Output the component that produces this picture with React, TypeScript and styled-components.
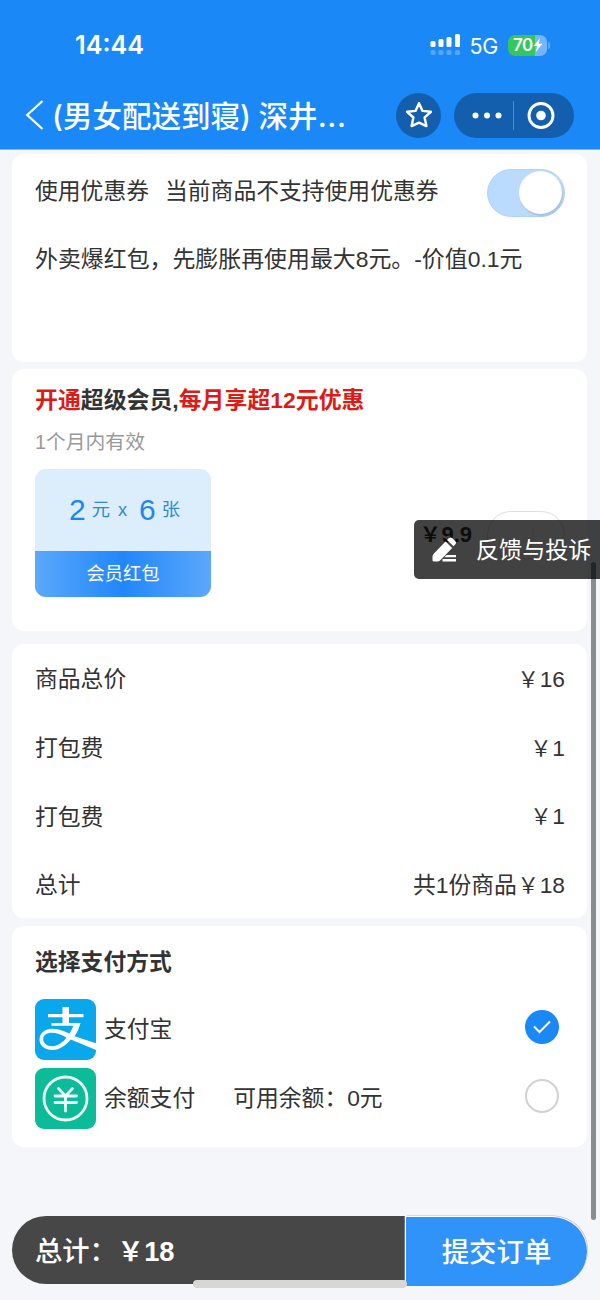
import React from "react";
import styled, { createGlobalStyle } from "styled-components";

const Global = createGlobalStyle`
  * { box-sizing: border-box; }
  body {
    margin: 0;
    background: #f4f6fa;
    color: #333;
    font-family: "Liberation Sans", "Noto Sans CJK SC", sans-serif;
  }
`;

const Screen = styled.main`
  position: relative;
  width: 600px;
  height: 1300px;
  overflow: hidden;
  background: #f4f6fa;
  font-size: 22.8px;
  line-height: 34px;
  white-space: nowrap;
`;

const Header = styled.header`
  height: 150px;
  background: #1b88f7;
  color: #fff;
  border-bottom: 1px solid #74c0fb;
`;

const StatusBar = styled.div`
  display: flex;
  align-items: center;
  height: 90px;
  padding: 0 51px 0 75px;
  font-family: Inter, sans-serif;
`;

const Clock = styled.span`
  flex: 1;
  font-size: 25.2px;
  font-weight: 600;
`;

const Network = styled.span`
  margin: 1px 10px 0 9px;
  font-size: 21.5px;
  letter-spacing: -0.3px;
`;

const Signal = styled.svg`
  display: block;
  margin-right: -1px;
`;

const Battery = styled.div`
  display: flex;
  align-items: center;
  width: 39px;
  height: 21px;
  padding-left: 5px;
  border-radius: 7px;
  background: linear-gradient(90deg, #34c759 27px, #75b6fa 27px);
  font-size: 17px;
  font-weight: 600;
  letter-spacing: -0.5px;
`;

const BatteryCap = styled.div`
  width: 2px;
  height: 7px;
  margin: 0 -1px 0 1px;
  border-radius: 0 2px 2px 0;
  background: #5aa9f9;
`;

const NavBar = styled.div`
  display: flex;
  align-items: center;
  height: 50px;
  padding: 0 26px 0 25px;
`;

const Title = styled.h1`
  flex: 1;
  margin: 1px 0 0 8px;
  font-family: Inter, "Noto Sans CJK SC", sans-serif;
  font-size: 29.5px;
  font-weight: 500;
  line-height: 44px;
`;

const Ellipsis = styled.span`
  letter-spacing: 0.8px;
`;

const StarButton = styled.button`
  display: grid;
  place-items: center;
  width: 45px;
  height: 45px;
  margin-right: 13px;
  padding: 0;
  border: 0;
  border-radius: 50%;
  background: #135fad;
`;

const Capsule = styled.div`
  display: flex;
  align-items: center;
  width: 120px;
  height: 45px;
  border-radius: 23px;
  background: #135fad;
`;

const Content = styled.div`
  padding: 4px 13px 0 12px;
`;

const Card = styled.section<{ $height: number; $gap: number }>`
  height: ${(p) => p.$height}px;
  margin-bottom: ${(p) => p.$gap}px;
  padding: 0 22px 0 23px;
  border-radius: 12px;
  background: #fff;
`;

const Row = styled.div<{ $height?: number }>`
  display: flex;
  align-items: center;
  justify-content: space-between;
  height: ${(p) => p.$height ?? 68.7}px;
`;

const FeeRow = styled(Row)`
  padding-top: 2px;
`;

const CouponRow = styled(Row)`
  padding-top: 5px;
`;

const CouponText = styled.span`
  padding-bottom: 4px;
`;

const CouponLabel = styled.span`
  margin-right: 16px;
`;

const Note = styled.p`
  margin: 16px 0 0;
  font-size: 22.92px;
`;

const Toggle = styled.span<{ $on?: boolean }>`
  display: flex;
  justify-content: ${(p) => (p.$on ? "flex-end" : "flex-start")};
  width: 78px;
  height: 48px;
  padding: 1px 2px;
  border: 1px solid ${(p) => (p.$on ? "#b3d4f9" : "#dedede")};
  border-radius: 24px;
  background: ${(p) => (p.$on ? "#bbdbfe" : "#fff")};
`;

const Knob = styled.span`
  width: 43px;
  height: 43px;
  border-radius: 50%;
  background: #fff;
  box-shadow: 1px 2px 2px rgba(0, 0, 0, 0.13);
`;

const MemberTitle = styled.h2`
  margin: 0;
  padding-top: 14px;
  font-size: 22.9px;
  font-weight: 600;
  line-height: 34px;
`;

const Red = styled.span`
  color: #dd1a14;
`;

const Validity = styled.p`
  margin: 8px 0 0;
  color: #999;
  font-size: 19.8px;
`;

const MemberRow = styled.div`
  display: flex;
  align-items: flex-start;
  justify-content: space-between;
  margin-top: 10px;
`;

const Ticket = styled.div`
  flex: none;
  width: 176px;
  height: 128px;
  margin-right: auto;
  border-radius: 11px;
  overflow: hidden;
  background: #dceefc;
  text-align: center;
`;

const TicketValue = styled.div`
  display: flex;
  align-items: center;
  height: 82px;
  padding-left: 34px;
  color: #2f8bce;
  font-size: 18.3px;
`;

const Big = styled.b`
  margin-right: 6px;
  color: #1f86ea;
  font-size: 30px;
  font-weight: 400;
`;

const Times = styled.span`
  margin: 0 12px 0 8px;
`;

const TicketName = styled.div`
  height: 46px;
  background: linear-gradient(90deg, #5ca8fb, #2087fa 50%, #5ca8fb);
  color: #fff;
  font-size: 18.3px;
  line-height: 45px;
`;

const MemberPrice = styled.strong`
  flex: none;
  margin: 49px 15px 0 0;
  font-size: 22px;
  font-weight: 700;
`;

const Yen = styled.span`
  display: inline-block;
  width: 1em;
  text-align: center;

  & > span {
    margin: 0 -0.1em;
    font-size: 0.94em;
  }
`;

const MemberToggle = styled(Toggle)`
  flex: none;
  margin-top: 42px;
`;

const PayTitle = styled.h2`
  margin: 0;
  padding: 19px 0 16px;
  font-size: 22.8px;
  font-weight: 600;
  line-height: 34px;
`;

const PayLogo = styled.svg`
  flex: none;
  margin-right: 8px;
`;

const PayName = styled.span`
  flex: 1;
`;

const Balance = styled.span`
  margin-left: 38px;
`;

const Radio = styled.span<{ $checked?: boolean }>`
  display: grid;
  place-items: center;
  width: 34px;
  height: 34px;
  margin: 0 6px 4px 0;
  border: ${(p) => (p.$checked ? "0" : "2px solid #d2d2d2")};
  border-radius: 50%;
  background: ${(p) => (p.$checked ? "#1b88f7" : "#fff")};
`;

const OrderBar = styled.footer`
  position: relative;
  display: flex;
  height: 69px;
  margin: 69px 13px 0 12px;
`;

const Total = styled.div`
  width: 393px;
  height: 68px;
  padding-left: 23px;
  border-right: 1px solid #777;
  border-radius: 34px 0 0 34px;
  background: #474747;
  color: #fff;
  font-size: 27.3px;
  font-weight: 500;
  line-height: 72px;
`;

const TotalPrice = styled.b`
  font-weight: 600;
`;

const Submit = styled.button`
  width: 181px;
  height: 69px;
  margin: 1px 0 0 1px;
  padding: 0;
  border: 0;
  border-radius: 0 35px 35px 0;
  background: #2f93fa;
  box-shadow: 0.5px -1px 0 #fff, 1px -1.5px 0 #d8a8b8;
  color: #fff;
  font: 500 27.4px/71px "Liberation Sans", "Noto Sans CJK SC", sans-serif;
`;

const HomeIndicator = styled.div`
  position: absolute;
  left: 181px;
  top: 64px;
  width: 214px;
  height: 8px;
  border-radius: 4px;
  background: #d7d7d6;
`;

const Feedback = styled.aside`
  position: absolute;
  left: 414px;
  top: 520px;
  display: flex;
  align-items: center;
  width: 190px;
  height: 59px;
  padding-left: 17px;
  border-radius: 5px;
  background: rgba(0, 0, 0, 0.74);
  color: #fff;
  font-size: 23.1px;
`;

const PencilIcon = styled.svg`
  margin-right: 18px;
`;

const ScrollThumb = styled.div`
  position: absolute;
  left: 591px;
  top: 562px;
  width: 5px;
  height: 658px;
  border-radius: 3px;
  background: rgba(0, 0, 0, 0.43);
`;

const fees = [
  { label: "商品总价", amount: "16" },
  { label: "打包费", amount: "1" },
  { label: "打包费", amount: "1" },
  { label: "总计", prefix: "共1份商品", amount: "18" },
];

function YenSign() {
  return (
    <Yen>
      <span>￥</span>
    </Yen>
  );
}

export default function App() {
  return (
    <Screen>
      <Global />
      <Header>
        <StatusBar>
          <Clock>14:44</Clock>
          <Signal width="31" height="22" viewBox="0 0 31 22" fill="#fff">
            <rect x="0.5" y="7" width="5" height="6" rx="1.5" />
            <rect x="8.5" y="5" width="5" height="8" rx="1.5" />
            <rect x="16.5" y="3" width="5" height="10" rx="1.5" />
            <rect x="25" y="0" width="5" height="13" rx="1.5" />
            <g opacity=".25">
              <rect x="0.5" y="16" width="5" height="5" rx="1.5" />
              <rect x="8.5" y="16" width="5" height="5" rx="1.5" />
              <rect x="16.5" y="16" width="5" height="5" rx="1.5" />
              <rect x="25" y="16" width="5" height="5" rx="1.5" />
            </g>
          </Signal>
          <Network>5G</Network>
          <Battery>
            70
            <svg width="10" height="14" viewBox="0 0 9 14" fill="#fff">
              <path d="M6.5 0 0 8h3.7L2.3 14 9 5.7H5.2z" />
            </svg>
          </Battery>
          <BatteryCap />
        </StatusBar>
        <NavBar>
          <svg width="19" height="30" viewBox="0 0 19 30" fill="none" stroke="#fff" strokeWidth="2.2">
            <path d="M17.500 1 2.200 15l15.300 14" />
          </svg>
          <Title>
            (男女配送到寝) 深井<Ellipsis>...</Ellipsis>
          </Title>
          <StarButton aria-label="收藏">
            <svg width="28" height="28" viewBox="0 0 28 28" fill="none" stroke="#fff" strokeWidth="2.4" strokeLinejoin="round">
              <path d="m14 2.200 3.500 7.700 8.400.9-6.300 5.700 1.800 8.600-7.400-3.400-7.400 3.400 1.800-8.600-6.300-5.700 8.400-.9z" />
            </svg>
          </StarButton>
          <Capsule>
            <svg width="120" height="45" viewBox="0 0 120 45" fill="#fff">
              <circle cx="21.500" cy="22.500" r="3" />
              <circle cx="33" cy="22.500" r="3" />
              <circle cx="44.500" cy="22.500" r="3" />
              <path d="M59.500 8v29" stroke="#4b8bcb" strokeWidth="1" />
              <circle cx="87" cy="22.500" r="12" fill="none" stroke="#fff" strokeWidth="2.900" />
              <circle cx="87" cy="22.500" r="4.800" />
            </svg>
          </Capsule>
        </NavBar>
      </Header>

      <Content>
        <Card $height={208} $gap={7}>
          <CouponRow $height={72}>
            <CouponText>
              <CouponLabel>使用优惠券</CouponLabel>当前商品不支持使用优惠券
            </CouponText>
            <Toggle $on>
              <Knob />
            </Toggle>
          </CouponRow>
          <Note>外卖爆红包，先膨胀再使用最大8元。-价值0.1元</Note>
        </Card>

        <Card $height={262} $gap={13}>
          <MemberTitle>
            <Red>开通</Red>超级会员,<Red>每月享超12元优惠</Red>
          </MemberTitle>
          <Validity>1个月内有效</Validity>
          <MemberRow>
            <Ticket>
              <TicketValue>
                <Big>2</Big>元<Times>x</Times>
                <Big>6</Big>张
              </TicketValue>
              <TicketName>会员红包</TicketName>
            </Ticket>
            <MemberPrice>
              <YenSign />
              9.9
            </MemberPrice>
            <MemberToggle>
              <Knob />
            </MemberToggle>
          </MemberRow>
        </Card>

        <Card $height={274} $gap={8}>
          {fees.map(({ label, prefix, amount }, i) => (
            <FeeRow key={i}>
              <span>{label}</span>
              <span>
                {prefix}
                <YenSign />
                {amount}
              </span>
            </FeeRow>
          ))}
        </Card>

        <Card $height={221} $gap={0}>
          <PayTitle>选择支付方式</PayTitle>
          <Row>
            <PayLogo width="61" height="61" viewBox="0 0 61 61">
              <rect width="61" height="61" rx="9" fill="#09a7ec" />
              <path d="M27.500 8h6.500v7h14.500v3.200H34v5.800h11.500c-1.200 5-3.200 9.300-5.900 13.200L61 44.200V51L35.800 40.600C30.500 47 24.500 51 17.500 51 9.500 51 4.500 46.500 4.500 40.500c0-6.500 5.500-10.700 12.500-10.700 5.700 0 11 2 17.300 4.800 1.800-2.500 3.100-5.100 4-7.900H16.500V24h11v-5.800H13V15h14.500zM31.500 38.600c-5.500-3-10-4.900-14.700-4.900-5.300 0-8.600 2.700-8.600 6.600 0 4.200 3.800 7 9.300 7 5 0 10-3.300 14-8.700z" fill="#fff" />
            </PayLogo>
            <PayName>支付宝</PayName>
            <Radio $checked>
              <svg width="18" height="14" viewBox="0 0 18 14" fill="none" stroke="#fff" strokeWidth="2">
                <path d="m1 6.500 5.500 5.500L17 1.500" />
              </svg>
            </Radio>
          </Row>
          <Row>
            <PayLogo width="61" height="61" viewBox="0 0 61 61" fill="none" stroke="#effffa" strokeWidth="2.800" strokeLinecap="round">
              <rect width="61" height="61" rx="9" fill="#0cbb98" stroke="none" />
              <circle cx="30.500" cy="30.500" r="21.500" />
              <path d="m23.500 20.500 7 7.500 7-7.500M30.500 28v15M20 28h21.500M20 34.500h21.500" />
            </PayLogo>
            <PayName>
              余额支付<Balance>可用余额：0元</Balance>
            </PayName>
            <Radio />
          </Row>
        </Card>
      </Content>

      <OrderBar>
        <Total>
          总计：
          <TotalPrice>
            <YenSign />
            18
          </TotalPrice>
        </Total>
        <HomeIndicator />
        <Submit>提交订单</Submit>
      </OrderBar>

      <ScrollThumb />
      <Feedback>
        <PencilIcon width="27" height="27" viewBox="0 0 27 27" fill="#fff">
          <path d="m14.500 5.500 6.700 6.500L9 24.500q-1 1-2.500 1H3q-1.500 0-1.500-1.500v-3.500q0-1.500 1-2.500z" />
          <path d="m16 4 1.700-1.700q1.800-1.800 3.700 0l2.700 2.600q1.900 1.900 0 3.700l-1.600 1.700z" />
          <path d="M15.500 19H25v2.300H13.300zM11.500 23H25v2.500H11.500z" />
        </PencilIcon>
        反馈与投诉
      </Feedback>
    </Screen>
  );
}
